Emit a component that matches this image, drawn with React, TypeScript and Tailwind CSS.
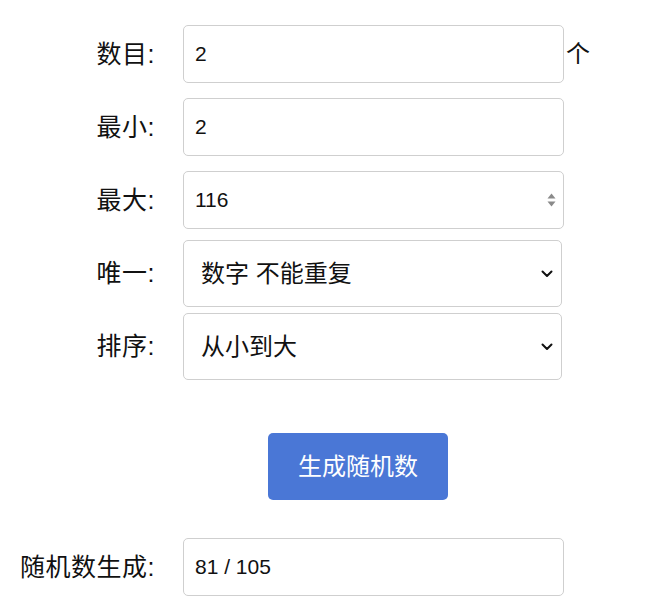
import { useState } from 'react'

const font = { fontFamily: '"Liberation Sans", "Noto Sans CJK SC", sans-serif' }

function Label({ text }: { text: string }) {
  return (
    <label className="w-[155px] shrink-0 text-right text-[25px] leading-none tracking-[0.5px] text-[#111]">
      {text}
    </label>
  )
}

function Chevron() {
  return (
    <svg
      className="pointer-events-none absolute right-[9px] top-1/2 -translate-y-1/2"
      width="12"
      height="8"
      viewBox="0 0 12 8"
      fill="none"
    >
      <path d="M1.5 1.5 6 6l4.5-4.5" stroke="#111" strokeWidth="2" strokeLinecap="round" strokeLinejoin="round" />
    </svg>
  )
}

export default function App() {
  const [count, setCount] = useState('2')
  const [min, setMin] = useState('2')
  const [max, setMax] = useState('116')
  const [unique, setUnique] = useState('no')
  const [order, setOrder] = useState('asc')
  const [result, setResult] = useState('81 / 105')

  const generate = () => {
    const n = parseInt(count) || 1
    const lo = parseInt(min) || 0
    const hi = parseInt(max) || lo
    const out: number[] = []
    while (out.length < n) {
      const v = lo + Math.floor(Math.random() * (hi - lo + 1))
      if (unique === 'no' && out.includes(v) && hi - lo + 1 >= n) continue
      out.push(v)
    }
    if (order === 'asc') out.sort((a, b) => a - b)
    if (order === 'desc') out.sort((a, b) => b - a)
    setResult(out.join(' / '))
  }

  const inputCls =
    'h-[58px] w-[381px] rounded-[5px] border border-[#cfcfcf] bg-white px-[11px] text-[21px] text-[#111] outline-none'
  const selectCls =
    'h-[67px] w-[379px] appearance-none rounded-[5px] border border-[#cfcfcf] bg-white pl-[17px] pr-8 text-[24px] text-[#111] outline-none'

  return (
    <div className="min-h-[606px] w-[646px] bg-white pt-[25px]" style={font}>
      <div className="flex items-center">
        <Label text="数目:" />
        <input className={`ml-[28px] ${inputCls}`} value={count} onChange={(e) => setCount(e.target.value)} />
        <span className="ml-[2px] text-[24px] leading-none text-[#111]">个</span>
      </div>

      <div className="mt-[15px] flex items-center">
        <Label text="最小:" />
        <input className={`ml-[28px] ${inputCls}`} value={min} onChange={(e) => setMin(e.target.value)} />
      </div>

      <div className="mt-[15px] flex items-center">
        <Label text="最大:" />
        <div className="relative ml-[28px]">
          <input className={`${inputCls} text-[20px]`} value={max} onChange={(e) => setMax(e.target.value)} />
          <svg
            className="pointer-events-none absolute right-[8px] top-1/2 -translate-y-1/2"
            width="9"
            height="16"
            viewBox="0 0 9 16"
          >
            <path d="M4.5 1.5 8.5 6.5h-8z" fill="#8a8a8a" />
            <path d="M4.5 14.5 8.5 9.5h-8z" fill="#8a8a8a" />
          </svg>
        </div>
      </div>

      <div className="mt-[11px] flex items-center">
        <Label text="唯一:" />
        <div className="relative ml-[28px]">
          <select className={selectCls} value={unique} onChange={(e) => setUnique(e.target.value)}>
            <option value="no">数字 不能重复</option>
            <option value="yes">数字 可以重复</option>
          </select>
          <Chevron />
        </div>
      </div>

      <div className="mt-[6px] flex items-center">
        <Label text="排序:" />
        <div className="relative ml-[28px]">
          <select className={selectCls} value={order} onChange={(e) => setOrder(e.target.value)}>
            <option value="asc">从小到大</option>
            <option value="desc">从大到小</option>
            <option value="none">不排序</option>
          </select>
          <Chevron />
        </div>
      </div>

      <button
        onClick={generate}
        className="ml-[268px] mt-[53px] h-[67px] w-[180px] rounded-[5px] bg-[#4a77d6] text-[24px] text-white"
      >
        生成随机数
      </button>

      <div className="mt-[38px] flex items-center">
        <Label text="随机数生成:" />
        <input className={`ml-[28px] ${inputCls}`} value={result} readOnly />
      </div>
    </div>
  )
}
